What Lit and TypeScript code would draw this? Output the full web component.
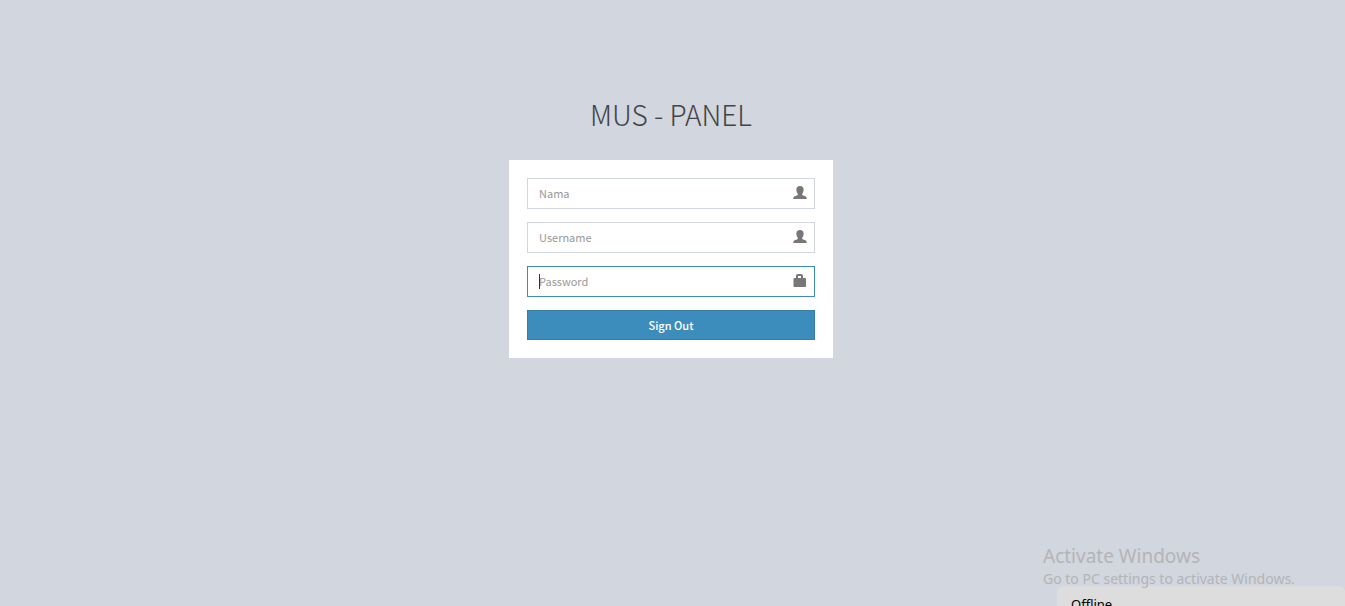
import { LitElement, html, css, svg } from "lit";
import { customElement, property } from "lit/decorators.js";

const userIcon = svg`<path d="M7 0C9.400 0 10.600 1.400 10.600 3.600C10.600 5.600 10 7 9.200 7.900V9C9.600 9.600 11.600 9.700 12.800 10.500C13.500 11 13.700 12 13.700 13H.3C.3 12 .5 11 1.200 10.500C2.400 9.700 4.400 9.600 4.800 9V7.900C4 7 3.400 5.600 3.400 3.600C3.400 1.400 4.600 0 7 0Z"/>`;
const lockIcon = svg`<path fill-rule="evenodd" d="M3 4V2C3 .8 3.800 0 5 0H8C9.200 0 10 .8 10 2V4H12C12.600 4 13 4.400 13 5V12C13 12.600 12.600 13 12 13H1.500C.9 13 .5 12.600 .5 12V5C.5 4.400.9 4 1.500 4ZM5 4H8V2H5Z"/>`;

@customElement("login-field")
class LoginField extends LitElement {
  @property() label = "";
  @property() type = "text";
  @property() icon = "user";
  @property({ type: Boolean }) active = false;

  static styles = css`
    :host { display: block; }
    .field { position: relative; display: flex; }
    .control {
      box-sizing: border-box;
      width: 100%;
      height: 31px;
      padding: 0 38px 2px 11px;
      border: 1px solid #d2d6de;
      border-radius: 0;
      background: #fff;
      color: #555;
      font: 11px "Noto Sans CJK SC", sans-serif;
      outline: none;
    }
    .control::placeholder { color: #999; opacity: 1; }
    .control:focus, .active .control { border-color: #3c8dbc; }
    .icon { position: absolute; right: 8px; top: 8px; width: 14px; height: 13px; fill: #777; pointer-events: none; }
    .caret { position: absolute; left: 12px; top: 8px; width: 1px; height: 15px; background: #333; }
  `;

  render() {
    return html`<div class="field ${this.active ? "active" : ""}">
      <input class="control" type=${this.type} placeholder=${this.label} aria-label=${this.label} />
      ${this.active ? html`<span class="caret"></span>` : ""}
      <svg class="icon" viewBox="0 0 14 13" aria-hidden="true">${this.icon === "user" ? userIcon : lockIcon}</svg>
    </div>`;
  }
}

@customElement("app-root")
class AppRoot extends LitElement {
  static styles = css`
    :host {
      display: block;
      position: relative;
      min-height: 100vh;
      overflow: hidden;
      box-sizing: border-box;
      padding: 91px 3px 0 0;
      background: #d2d6de;
      font-family: "Noto Sans CJK SC", sans-serif;
    }
    .login { width: 324px; max-width: 100%; margin: 0 auto; }
    .title {
      margin: 0 0 23px;
      color: #444;
      font-size: 28px;
      font-weight: 300;
      line-height: 46px;
      text-align: center;
    }
    .panel { display: flex; flex-direction: column; gap: 13px; padding: 18px; background: #fff; }
    .submit {
      height: 30px;
      padding: 0;
      border: 1px solid #367fa9;
      border-radius: 0;
      background: #3c8dbc;
      color: #fff;
      font: 500 11px "Noto Sans CJK SC", sans-serif;
      cursor: pointer;
    }
    .notice {
      position: absolute;
      z-index: 1;
      left: calc(100% - 302px);
      bottom: 17px;
      color: #b3b4b7;
      font-family: "Noto Sans", sans-serif;
      white-space: nowrap;
      pointer-events: none;
    }
    .notice-title { margin: 0; font-size: 19px; line-height: 26px; }
    .notice-text { margin: 0; font-size: 14px; line-height: 20px; }
    .chat {
      position: absolute;
      right: 0;
      bottom: 0;
      width: 288px;
      height: 20px;
      padding: 0 14px;
      box-sizing: border-box;
      overflow: hidden;
      border: 0;
      border-radius: 6px 6px 0 0;
      background: #ddd;
      color: #000;
      font: 13px/36px "Noto Sans", sans-serif;
      text-align: left;
    }
    .chat-label { display: block; height: 20px; }
  `;

  render() {
    return html`
      <main class="login">
        <h1 class="title">MUS - PANEL</h1>
        <form class="panel" @submit=${(e: Event) => e.preventDefault()}>
          <login-field label="Nama"></login-field>
          <login-field label="Username"></login-field>
          <login-field label="Password" type="password" icon="lock" active></login-field>
          <button class="submit" type="submit">Sign Out</button>
        </form>
      </main>
      <aside class="notice">
        <p class="notice-title">Activate Windows</p>
        <p class="notice-text">Go to PC settings to activate Windows.</p>
      </aside>
      <button class="chat" type="button"><span class="chat-label">Offline</span></button>
    `;
  }
}
